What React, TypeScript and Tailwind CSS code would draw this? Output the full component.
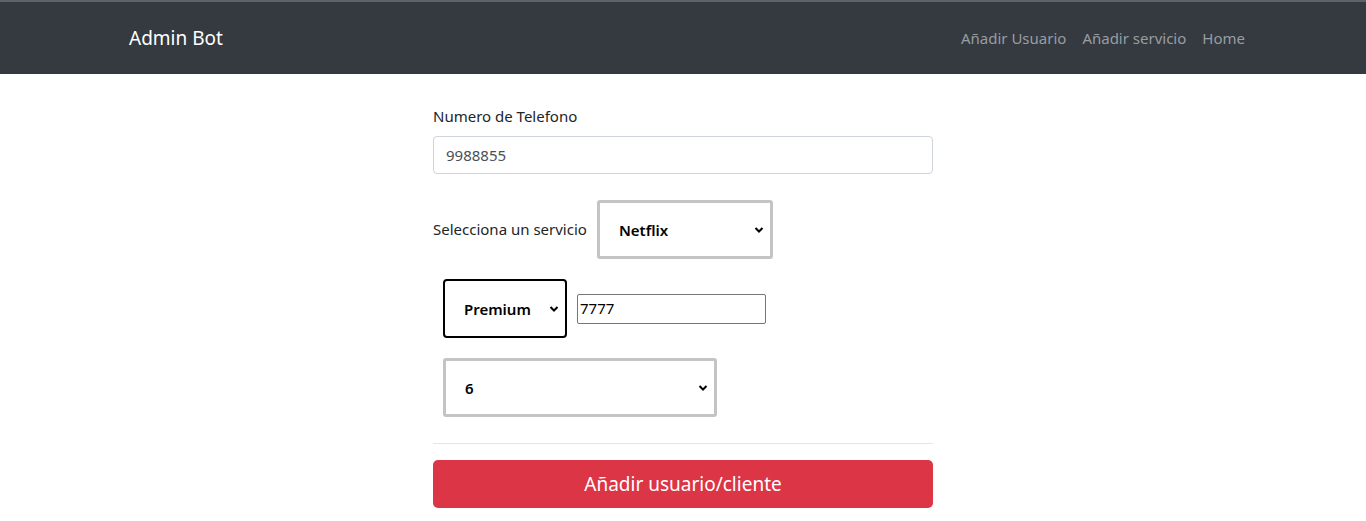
import React from 'react';

const font = { fontFamily: '"Segoe UI", "Noto Sans", "Liberation Sans", sans-serif' };

const Chevron: React.FC = () => (
  <svg className="pointer-events-none absolute right-[6px] top-1/2 -translate-y-1/2" width="10" height="7" viewBox="0 0 10 7">
    <path d="M1.5 1.5 L5 5 L8.5 1.5" fill="none" stroke="#000" strokeWidth="2" />
  </svg>
);

const FakeSelect: React.FC<{ value: string; className: string }> = ({ value, className }) => (
  <div className={`relative flex items-center bg-white ${className}`}>
    <span className="pl-[19px] pt-[1px] text-[15px] font-semibold text-black">{value}</span>
    <Chevron />
  </div>
);

export default function App() {
  return (
    <div className="min-h-[521px] bg-white text-[#212529]" style={font}>
      <nav className="h-[74px] border-t-2 border-[#5e6166] bg-[#343a40]">
        <div className="mx-auto flex h-full w-[1140px] items-center justify-between pl-[16px] pr-[8px]">
          <span className="text-[19px] text-white">Admin Bot</span>
          <div className="flex gap-[16px] text-[15px] text-[#9a9da0]">
            <span>Añadir Usuario</span>
            <span>Añadir servicio</span>
            <span>Home</span>
          </div>
        </div>
      </nav>

      <div className="mx-auto w-[500px] pt-[30px]">
        <label className="block text-[15px] leading-[24px]">Numero de Telefono</label>
        <div className="mt-[8px] flex h-[38px] items-center rounded-[4px] border border-[#ced4da] px-[12px] text-[15px] text-[#495057]">
          9988855
        </div>

        <div className="mt-[26px] flex items-center gap-[10px]">
          <span className="text-[15px]">Selecciona un servicio</span>
          <FakeSelect value="Netflix" className="h-[59px] w-[176px] rounded-[3px] border-[3px] border-[#c4c4c4]" />
        </div>

        <div className="ml-[10px] mt-[20px] flex items-center gap-[10px]">
          <FakeSelect value="Premium" className="h-[59px] w-[124px] rounded-[4px] border-2 border-black" />
          <div className="flex h-[30px] w-[189px] items-center rounded-[2px] border border-[#767676] px-[2px] text-[15px] text-black">
            7777
          </div>
        </div>

        <div className="ml-[10px] mt-[20px]">
          <FakeSelect value="6" className="h-[59px] w-[274px] rounded-[3px] border-[3px] border-[#c4c4c4]" />
        </div>

        <hr className="mt-[26px] border-t border-[#e5e5e5]" />

        <button className="mt-[16px] flex h-[48px] w-full items-center justify-center rounded-[5px] bg-[#dc3545] text-[19px] text-white">
          Añadir usuario/cliente
        </button>
      </div>
    </div>
  );
}
